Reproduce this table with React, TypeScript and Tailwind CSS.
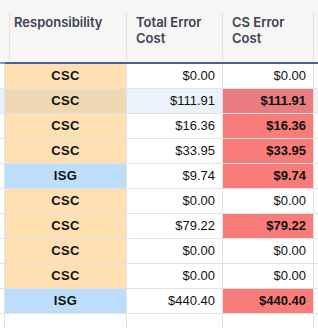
import React from "react";

type Row = { team: "CSC" | "ISG"; total: string; cs: string; hot: boolean };

const rows: Row[] = [
  { team: "CSC", total: "$0.00", cs: "$0.00", hot: false },
  { team: "CSC", total: "$111.91", cs: "$111.91", hot: true },
  { team: "CSC", total: "$16.36", cs: "$16.36", hot: true },
  { team: "CSC", total: "$33.95", cs: "$33.95", hot: true },
  { team: "ISG", total: "$9.74", cs: "$9.74", hot: true },
  { team: "CSC", total: "$0.00", cs: "$0.00", hot: false },
  { team: "CSC", total: "$79.22", cs: "$79.22", hot: true },
  { team: "CSC", total: "$0.00", cs: "$0.00", hot: false },
  { team: "CSC", total: "$0.00", cs: "$0.00", hot: false },
  { team: "ISG", total: "$440.40", cs: "$440.40", hot: true },
];

const HOVER = 1;

function HeaderCell({
  w,
  children,
  last,
  edge,
}: {
  w: string;
  children?: React.ReactNode;
  last?: boolean;
  edge?: string;
}) {
  return (
    <div className={`${w} shrink-0 pt-3 flex border-b-2 ${edge ?? "border-b-[#4d5f95]"}`}>
      <div
        className={`flex-1 ${
          last ? "" : "border-r border-r-[#e3e3e3]"
        } pl-[9px] pt-[2px] text-[13px] leading-[16px] font-semibold text-[#3b4252]`}
      >
        {children}
      </div>
    </div>
  );
}

export default function App() {
  return (
    <div
      className="w-[318px] h-[328px] overflow-hidden bg-white"
      style={{ fontFamily: "'Liberation Sans', Arial, sans-serif" }}
    >
      {/* header */}
      <div
        className="flex h-[64px] bg-[#f7f6f5]"
        style={{ fontFamily: "Inter, 'Open Sans', sans-serif" }}
      >
        <HeaderCell w="w-[5px]" edge="border-b-[#6f9fd8]" />
        <HeaderCell w="w-[122px]">Responsibility</HeaderCell>
        <HeaderCell w="w-[96px]">
          Total Error
          <br />
          Cost
        </HeaderCell>
        <HeaderCell w="w-[91px]">
          CS Error
          <br />
          Cost
        </HeaderCell>
        <HeaderCell w="flex-1" last />
      </div>

      {/* body */}
      <div className="flex flex-col">
        {[...rows, null].map((r, i) => {
          const hover = i === HOVER;
          const teamBg = !r
            ? "bg-white"
            : r.team === "ISG"
            ? "bg-[#bcdefb]"
            : hover
            ? "bg-[#efd8b3]"
            : "bg-[#fee0b3]";
          const plainBg = hover ? "bg-[#eaf2fb]" : "bg-white";
          const csBg = r && r.hot ? (hover ? "bg-[#e87c80]" : "bg-[#f87c7a]") : plainBg;
          return (
            <div key={i} className="flex h-[25px] border-b border-[#e2e2e2] text-[13px] text-[#111]">
              <div className={`w-[5px] shrink-0 border-r border-[#e2e2e2] ${plainBg}`} />
              <div
                className={`w-[122px] shrink-0 border-r border-[#e2e2e2] ${teamBg} flex items-center justify-center font-bold tracking-[0.4px]`}
              >
                {r?.team}
              </div>
              <div
                className={`w-[96px] shrink-0 border-r border-[#e2e2e2] ${plainBg} flex items-center justify-end pr-[7px]`}
              >
                {r?.total}
              </div>
              <div
                className={`w-[91px] shrink-0 border-r border-[#e2e2e2] ${
                  r ? csBg : "bg-white"
                } flex items-center justify-end pr-[7px] ${r && r.hot ? "font-bold" : ""}`}
              >
                {r?.cs}
              </div>
              <div className={`flex-1 ${r ? plainBg : "bg-white"}`} />
            </div>
          );
        })}
      </div>
    </div>
  );
}
